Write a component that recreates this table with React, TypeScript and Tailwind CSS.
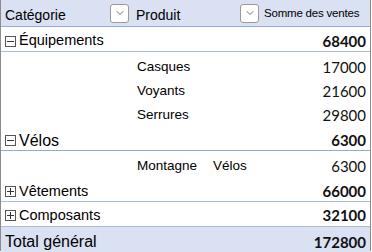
import { ChevronDown } from 'lucide-react'

const arial = { fontFamily: '"Liberation Sans", Arial, sans-serif' }

function Toggle({ open }: { open: boolean }) {
  return (
    <span className="relative inline-block w-[11px] h-[11px] border border-[#555] bg-white mr-[3px] shrink-0">
      <span className="absolute left-[1px] right-[1px] top-[4px] h-px bg-[#333]" />
      {!open && <span className="absolute top-[1px] bottom-[1px] left-[4px] w-px bg-[#333]" />}
    </span>
  )
}

function Drop() {
  return (
    <span className="flex items-center justify-center w-[19px] h-[19px] bg-white border border-[#9a9a9a] rounded-[3px]">
      <ChevronDown className="w-3 h-3 text-[#444]" strokeWidth={1.5} />
    </span>
  )
}

function Num({ v, bold }: { v: string; bold?: boolean }) {
  return (
    <span
      className={`text-[15px] text-[#111] ${bold ? 'font-bold' : ''}`}
      style={{ fontFamily: 'Lato, "Open Sans", sans-serif' }}
    >
      {v}
    </span>
  )
}

export default function App() {
  const subs = [
    ['Casques', '17000'],
    ['Voyants', '21600'],
    ['Serrures', '29800'],
  ]

  return (
    <div className="w-[372px] h-[252px] bg-white text-black" style={arial}>
      <div className="w-[371px] h-[251px] border-l border-r border-b border-[#8c8c8c] flex flex-col">
        {/* header */}
        <div className="h-[27px] bg-[#d9e1f2] border-b border-[#8faadc] flex items-center shrink-0">
          <div className="w-[130px] flex items-center pl-[4px] pr-[2px]">
            <span className="text-[14px] flex-1 pt-[4px]">Catégorie</span>
            <Drop />
          </div>
          <div className="w-[129px] flex items-center pl-[5px] pr-[1px]">
            <span className="text-[14px] flex-1 pt-[4px]">Produit</span>
            <Drop />
          </div>
          <span className="pl-[4px] text-[11.5px] tracking-[-0.2px] pt-[2px]">Somme des ventes</span>
        </div>

        {/* Équipements */}
        <div className="h-[25px] border-b border-[#a9bbe0] flex items-center pl-[4px] pr-[4px] pt-[4px] shrink-0">
          <Toggle open />
          <span className="text-[14.5px] flex-1">Équipements</span>
          <Num v="68400" bold />
        </div>
        <div className="h-[3px] shrink-0" />
        {subs.map(([p, v]) => (
          <div key={p} className="h-[24px] flex items-center pr-[4px] pt-[1px] shrink-0">
            <span className="w-[136px]" />
            <span className="text-[13.5px] flex-1">{p}</span>
            <Num v={v} />
          </div>
        ))}

        {/* Vélos */}
        <div className="h-[24px] border-b border-[#8faadc] flex items-center pl-[4px] pr-[4px] pt-[4px] shrink-0">
          <Toggle open />
          <span className="text-[16px] flex-1">Vélos</span>
          <Num v="6300" bold />
        </div>
        <div className="h-[28px] flex items-center pr-[4px] pt-[2px] shrink-0">
          <span className="w-[136px]" />
          <span className="text-[13.5px] w-[76px]">Montagne</span>
          <span className="text-[13.5px] flex-1">Vélos</span>
          <Num v="6300" />
        </div>

        {/* Vêtements */}
        <div className="h-[23px] border-b border-[#a9bbe0] flex items-center pl-[4px] pr-[4px] pt-[3px] shrink-0">
          <Toggle open={false} />
          <span className="text-[14.5px] flex-1">Vêtements</span>
          <Num v="66000" bold />
        </div>

        {/* Composants */}
        <div className="h-[25px] border-b border-[#a9bbe0] flex items-center pl-[4px] pr-[4px] pt-[3px] shrink-0">
          <Toggle open={false} />
          <span className="text-[14.5px] flex-1">Composants</span>
          <Num v="32100" bold />
        </div>

        {/* Total */}
        <div className="flex-1 bg-[#d9e1f2] flex items-center pl-[4px] pr-[4px] pt-[3px]">
          <span className="text-[16px] flex-1">Total général</span>
          <Num v="172800" bold />
        </div>
      </div>
    </div>
  )
}
